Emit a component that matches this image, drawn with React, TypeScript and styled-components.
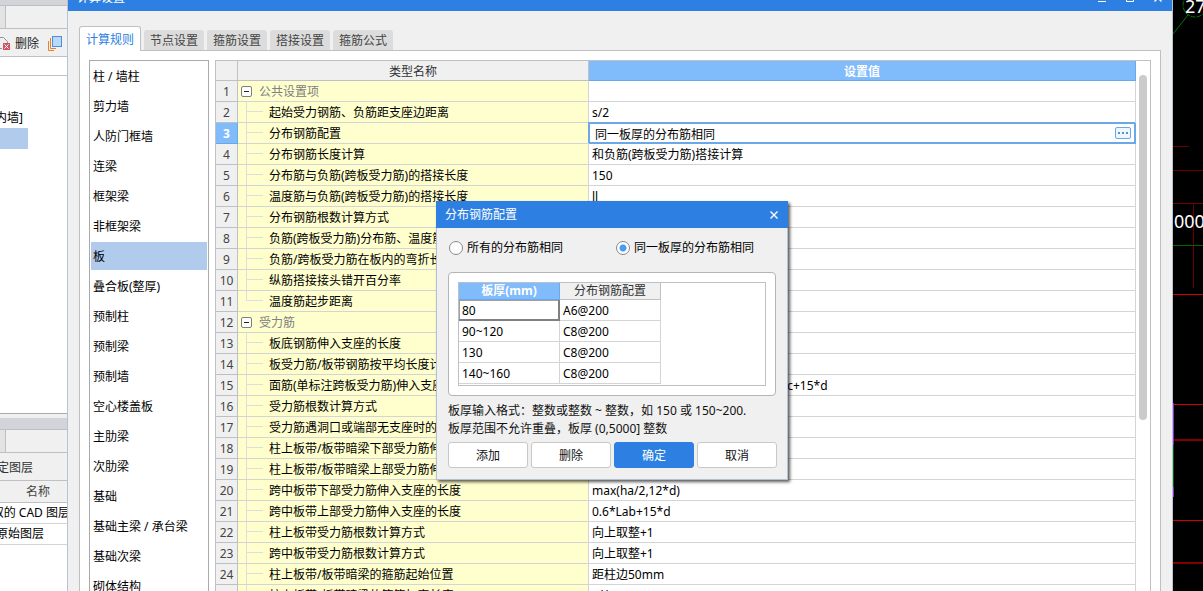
import React, { useState } from "react";
import styled, { createGlobalStyle, css } from "styled-components";

const color = {
  blue: "#2d80e1",
  head: "#80bbfb",
  headLine: "#6aa8e8",
  face: "#f0f0f0",
  line: "#d4d4d4",
  frame: "#bfc0c4",
  yellow: "#ffffce",
  pick: "#b1cbec",
};

const Global = createGlobalStyle`
  *, *::before, *::after { box-sizing: border-box; }
  body {
    margin: 0;
    background: #000;
    overflow: hidden;
  }
  body, button, input {
    font: 12px/16px "Noto Sans", "Noto Sans CJK SC", sans-serif;
    color: #000;
  }
  button { padding: 0; cursor: pointer; }
`;

const Desktop = styled.div`
  position: relative;
  display: flex;
  height: 100vh;
  overflow: hidden;
`;

/* ---------- docked panels on the left ---------- */

const Dock = styled.aside`
  flex: 0 0 67px;
  display: flex;
  flex-direction: column;
  overflow: hidden;
  background: #fff;
  white-space: nowrap;
`;

const DockCaption = styled.div<{ $h: number }>`
  flex: 0 0 ${(p) => p.$h}px;
  background: #d3d4da;
  border-bottom: 1px solid ${color.frame};
`;

const DockTabs = styled.div`
  flex: 0 0 23px;
  background: ${color.face};
  border-bottom: 1px solid ${color.frame};
`;

const DockTab = styled.div`
  width: 6px;
  height: 22px;
  background: #e3e3e3;
  border-right: 1px solid ${color.frame};
`;

const DockBar = styled.div`
  flex: 0 0 28px;
  display: flex;
  align-items: center;
  padding-top: 2px;
  background: ${color.face};
  border-bottom: 1px solid ${color.frame};
  color: #333;
`;

const BarButton = styled.button`
  display: flex;
  align-items: center;
  gap: 4px;
  border: 0;
  background: none;
  color: #222;
`;

const SearchStrip = styled.div`
  flex: 0 0 19px;
  border-bottom: 1px solid ${color.frame};
`;

const DockTree = styled.div`
  flex: 0 0 338px;
  padding-top: 32px;
  border-bottom: 1px solid #aaa;
`;

const TreePick = styled.div`
  width: 28px;
  height: 21px;
  background: ${color.pick};
`;

const DockGap = styled.div`
  flex: 0 0 4px;
  background: ${color.face};
`;

const Scrolled = styled.div<{ $end: number }>`
  display: flex;
  flex: none;
  justify-content: flex-end;
  width: ${(p) => p.$end}px;
  height: 20px;
  align-items: center;
`;

const LayerHead = styled.div`
  flex: 0 0 22px;
  padding: 3px 0 0 26px;
  background: ${color.face};
  border-bottom: 1px solid ${color.frame};
  color: #444;
`;

const LayerRow = styled.div`
  flex: 0 0 21px;
  display: flex;
  align-items: center;
  border-bottom: 1px solid ${color.line};
`;

/* ---------- settings window ---------- */

const SettingsWindow = styled.main`
  flex: 1 1 0;
  min-width: 0;
  display: flex;
  flex-direction: column;
  margin-top: -16px;
  background: ${color.face};
  border: solid #b9c2d2;
  border-width: 0 1px;
`;

const TitleBar = styled.header`
  flex: none;
  height: 27px;
  display: flex;
  align-items: center;
  justify-content: space-between;
  padding: 0 8px 0 9px;
  background: ${color.blue};
  color: #fff;
`;

const TitleTools = styled.div`
  display: flex;
  gap: 16px;
`;

const TitleButton = styled.button`
  display: flex;
  align-items: center;
  justify-content: center;
  width: 12px;
  height: 12px;
  border: 0;
  background: none;
  color: #fff;
`;

const Tabs = styled.nav`
  display: flex;
  align-items: flex-end;
  gap: 3px;
  height: 40px;
  margin: 0 11px -1px;
`;

const Tab = styled.button<{ $on?: boolean }>`
  position: relative;
  height: 20px;
  margin-bottom: 1px;
  padding: 2px 6px 0;
  border: 0;
  border-radius: 3px 3px 0 0;
  background: #dcdcdc;
  color: #444;
  ${(p) =>
    p.$on &&
    css`
      height: 25px;
      margin-bottom: 0;
      border: 1px solid ${color.frame};
      border-bottom: 0;
      background: #fff;
      color: ${color.blue};
    `}
`;

const Page = styled.section`
  flex: 1 1 0;
  min-height: 0;
  display: flex;
  gap: 6px;
  margin: 0 11px;
  padding: 9px 9px 0;
  background: #fff;
  border: 1px solid ${color.frame};
  border-bottom: 0;
  overflow: hidden;
`;

const Kinds = styled.ul`
  flex: 0 0 120px;
  display: flex;
  flex-direction: column;
  gap: 2px;
  margin: 0;
  padding: 1px;
  list-style: none;
  border: 1px solid #aaa;
  border-bottom: 0;
`;

const Kind = styled.button<{ $on: boolean }>`
  width: 100%;
  height: 28px;
  padding: 2px 2px 0;
  display: block;
  border: 0;
  background: ${(p) => (p.$on ? color.pick : "transparent")};
  text-align: left;
`;

const GridFrame = styled.div`
  flex: 1 1 0;
  min-width: 0;
  display: flex;
  border: 1px solid ${color.frame};
  border-bottom: 0;
`;

const Sheet = styled.table`
  flex: 1 1 0;
  align-self: flex-start;
  width: 100%;
  table-layout: fixed;
  border-collapse: separate;
  border-spacing: 0;
  white-space: nowrap;

  td { padding: 0; }
  th { padding: 2px 0 0; }
`;

const ColHead = styled.th<{ $on?: boolean }>`
  height: 20px;
  background: ${(p) => (p.$on ? color.head : color.face)};
  border: solid ${(p) => (p.$on ? color.headLine : color.frame)};
  border-width: 0 1px 1px 0;
  color: ${(p) => (p.$on ? "#fff" : "#333")};
  font-weight: ${(p) => (p.$on ? 700 : 400)};
`;

const RowHead = styled.th<{ $on?: boolean }>`
  height: 21px;
  background: ${(p) => (p.$on ? color.head : color.face)};
  border: solid ${(p) => (p.$on ? color.headLine : color.frame)};
  border-width: 0 1px 1px 0;
  color: ${(p) => (p.$on ? "#fff" : "#444")};
  font-weight: ${(p) => (p.$on ? 700 : 400)};
`;

const NameCell = styled.td`
  background: ${color.yellow};
  border: solid ${color.line};
  border-width: 0 1px 1px 0;
  overflow: hidden;
`;

const NameLine = styled.div<{ $group?: boolean }>`
  display: flex;
  align-items: center;
  height: 20px;
  gap: ${(p) => (p.$group ? 7 : 6)}px;
  padding-left: ${(p) => (p.$group ? 3 : 8)}px;
  color: ${(p) => (p.$group ? "#808080" : "#000")};
`;

const NameText = styled.span`
  padding-top: 2px;
`;

const Guide = styled.span<{ $last?: boolean }>`
  flex: 0 0 17px;
  height: 20px;
  background:
    linear-gradient(#dedede, #dedede) 0 0 / 1px ${(p) => (p.$last ? "50%" : "100%")} no-repeat,
    linear-gradient(#dedede, #dedede) 0 9px / 17px 1px no-repeat;
`;

const Fold = styled.button`
  display: flex;
  align-items: center;
  justify-content: center;
  width: 11px;
  height: 11px;
  border: 1px solid #808080;
  border-radius: 2px;
  background: #fff;

  &::before {
    content: "";
    width: 5px;
    height: 1px;
    background: #222;
  }
`;

const ValueCell = styled.td<{ $on?: boolean }>`
  border: solid ${color.line};
  border-width: 0 1px 1px 0;
  ${(p) =>
    p.$on &&
    css`
      border-color: ${color.headLine};
      box-shadow: inset -1px -1px 0 ${color.headLine}, inset 1px 1px 0 ${color.headLine},
        -1px -1px 0 ${color.headLine};
    `}
`;

const ValueLine = styled.div<{ $edit?: boolean }>`
  display: flex;
  align-items: center;
  height: 20px;
  padding: ${(p) => (p.$edit ? 0 : 2)}px 0 0 3px;
`;

const CellInput = styled.input`
  flex: 1;
  min-width: 0;
  height: 18px;
  padding: 2px 3px 0;
  border: 0;
  outline: 0;
  background: none;
`;

const MoreButton = styled.button`
  display: flex;
  align-items: center;
  justify-content: center;
  gap: 2px;
  width: 16px;
  height: 12px;
  margin-right: 4px;
  border: 1px solid ${color.headLine};
  border-radius: 2px;
  background: #eef6fe;

  i {
    width: 2px;
    height: 2px;
    background: #4a94d8;
  }
`;

const Scroll = styled.div`
  flex: 0 0 14px;
  padding: 14px 3px 0;
`;

const Thumb = styled.div`
  height: 345px;
  border-radius: 4px;
  background: #cbcbcb;
`;

/* ---------- rebar dialog ---------- */

const Dialog = styled.div`
  position: absolute;
  left: 436px;
  top: 201px;
  width: 352px;
  background: ${color.face};
  box-shadow: 2px 2px 3px rgba(0, 0, 0, 0.65);
`;

const DialogBody = styled.form`
  display: flex;
  flex-direction: column;
  padding: 12px 10px 11px 11px;
  border: 1px solid #b4c0d4;
  border-top: 0;
`;

const Choices = styled.div`
  display: grid;
  grid-template-columns: 167px 1fr;
  margin-bottom: 16px;
  padding-left: 1px;
`;

const Choice = styled.label`
  display: flex;
  align-items: center;
  gap: 4px;
`;

const Radio = styled.input`
  appearance: none;
  width: 14px;
  height: 14px;
  margin: 0;
  border: 1px solid #888;
  border-radius: 50%;
  background: #fff;

  &:checked {
    background: radial-gradient(circle, #4a9bf5 0 3px, #fff 4px);
  }
`;

const Group = styled.div`
  width: 328px;
  padding: 9px;
  background: #fff;
  border: 1px solid #b5b5b5;
  border-radius: 4px;
`;

const ThickFrame = styled.div`
  height: 104px;
  border: 1px solid ${color.frame};
`;

const ThickTable = styled.table`
  width: 202px;
  table-layout: fixed;
  border-collapse: separate;
  border-spacing: 0;
`;

const ThickHead = styled.th<{ $on?: boolean }>`
  height: 17px;
  padding: 0;
  background: ${(p) => (p.$on ? color.head : color.face)};
  border: solid ${(p) => (p.$on ? color.headLine : color.frame)};
  border-width: 0 1px 1px 0;
  color: ${(p) => (p.$on ? "#fff" : "#333")};
  font-weight: ${(p) => (p.$on ? 700 : 400)};
`;

const ThickCell = styled.td<{ $on?: boolean }>`
  height: 21px;
  padding: 2px 3px 0;
  border: solid ${color.line};
  border-width: 0 1px 1px 0;
  ${(p) =>
    p.$on &&
    css`
      border-color: #808080;
      box-shadow: inset -1px -1px 0 #808080, inset 1px 1px 0 #a0a0a0;
    `}
`;

const Hint = styled.p`
  margin: 6px 0 4px;
  line-height: 18px;
  color: #111;
  white-space: nowrap;
`;

const Actions = styled.div`
  display: flex;
  justify-content: space-between;
`;

const Action = styled.button<{ $main?: boolean }>`
  width: 80px;
  height: 26px;
  padding-top: 2px;
  border: 1px solid ${(p) => (p.$main ? color.blue : "#c8c8c8")};
  border-radius: 3px;
  background: ${(p) => (p.$main ? color.blue : "#fff")};
  color: ${(p) => (p.$main ? "#fff" : "#111")};
`;

/* ---------- drawing area ---------- */

const Drawing = styled.svg`
  flex: 0 0 30px;
  height: 591px;
  background: #000;
`;

const kinds = [
  "柱 / 墙柱", "剪力墙", "人防门框墙", "连梁", "框架梁", "非框架梁", "板", "叠合板(整厚)", "预制柱",
  "预制梁", "预制墙", "空心楼盖板", "主肋梁", "次肋梁", "基础", "基础主梁 / 承台梁", "基础次梁", "砌体结构",
];

type Row = { name: string; value?: string; group?: boolean; last?: boolean };

const rows: Row[] = [
  { name: "公共设置项", group: true },
  { name: "起始受力钢筋、负筋距支座边距离", value: "s/2" },
  { name: "分布钢筋配置", value: "同一板厚的分布筋相同" },
  { name: "分布钢筋长度计算", value: "和负筋(跨板受力筋)搭接计算" },
  { name: "分布筋与负筋(跨板受力筋)的搭接长度", value: "150" },
  { name: "温度筋与负筋(跨板受力筋)的搭接长度", value: "ll" },
  { name: "分布钢筋根数计算方式", value: "向下取整+1" },
  { name: "负筋(跨板受力筋)分布筋、温度筋是否带弯勾", value: "否" },
  { name: "负筋/跨板受力筋在板内的弯折长度", value: "板厚-2*保护层" },
  { name: "纵筋搭接接头错开百分率", value: "50%" },
  { name: "温度筋起步距离", value: "s", last: true },
  { name: "受力筋", group: true },
  { name: "板底钢筋伸入支座的长度", value: "max(ha/2,5*d)" },
  { name: "板受力筋/板带钢筋按平均长度计算", value: "否" },
  { name: "面筋(单标注跨板受力筋)伸入支座的锚固长度", value: "能直锚就直锚,否则按公式计算:ha-bhc+15*d" },
  { name: "受力筋根数计算方式", value: "向上取整+1" },
  { name: "受力筋遇洞口或端部无支座时的弯折长度", value: "板厚-2*保护层" },
  { name: "柱上板带/板带暗梁下部受力筋伸入支座的长度", value: "ha-bhc+15*d" },
  { name: "柱上板带/板带暗梁上部受力筋伸入支座的长度", value: "0.6*Lab+15*d" },
  { name: "跨中板带下部受力筋伸入支座的长度", value: "max(ha/2,12*d)" },
  { name: "跨中板带上部受力筋伸入支座的长度", value: "0.6*Lab+15*d" },
  { name: "柱上板带受力筋根数计算方式", value: "向上取整+1" },
  { name: "跨中板带受力筋根数计算方式", value: "向上取整+1" },
  { name: "柱上板带/板带暗梁的箍筋起始位置", value: "距柱边50mm" },
  { name: "柱上板带/板带暗梁的箍筋加密长度", value: "3*h" },
];

const thickness = [
  ["80", "A6@200"],
  ["90~120", "C8@200"],
  ["130", "C8@200"],
  ["140~160", "C8@200"],
];

function Cross({ size }: { size: number }) {
  return (
    <svg width={size} height={size} viewBox="0 0 8 8" stroke="currentColor" strokeWidth="1.4" fill="none">
      <path d="M0.5 0.5L7.5 7.5M7.5 0.5L0.5 7.5" />
    </svg>
  );
}

function LeftDock() {
  return (
    <Dock>
      <DockCaption $h={6} />
      <DockTabs>
        <DockTab />
      </DockTabs>
      <DockBar>
        <BarButton type="button">
          <svg width="11" height="16" viewBox="0 0 11 16" fill="none">
            <path d="M0 1.500H3.500L7.500 5.500V7M0 12.500H2" stroke="#8a97a3" />
            <rect x="3" y="7" width="7" height="7" fill="#cf5560" />
            <path d="M4.500 8.500L8.500 12.500M8.500 8.500L4.500 12.500" stroke="#fff" />
          </svg>
          删除
        </BarButton>
        <BarButton type="button" aria-label="复制">
          <svg width="24" height="16" viewBox="0 0 24 16" fill="none">
            <rect x="13.500" y="0.500" width="9" height="10" fill="#b9d8fb" stroke="#4a8fd8" />
            <path d="M11.500 2V12.500H17M9.500 5V14.500H15" stroke="#e8812c" />
          </svg>
        </BarButton>
      </DockBar>
      <SearchStrip />
      <DockTree>
        <Scrolled $end={23}>[内墙]</Scrolled>
        <TreePick />
      </DockTree>
      <DockGap />
      <DockCaption $h={12} />
      <DockTabs>
        <DockTab />
      </DockTabs>
      <DockBar>
        <Scrolled $end={33}>指定图层</Scrolled>
      </DockBar>
      <LayerHead>名称</LayerHead>
      <LayerRow>
        <Scrolled $end={70}>已提取的 CAD 图层</Scrolled>
      </LayerRow>
      <LayerRow>
        <Scrolled $end={44}>原始图层</Scrolled>
      </LayerRow>
    </Dock>
  );
}

function SettingsGrid() {
  return (
    <GridFrame>
      <Sheet>
        <colgroup>
          <col style={{ width: 22 }} />
          <col style={{ width: 351 }} />
          <col />
        </colgroup>
        <thead>
          <tr>
            <ColHead />
            <ColHead>类型名称</ColHead>
            <ColHead $on>设置值</ColHead>
          </tr>
        </thead>
        <tbody>
          {rows.map((row, i) => {
            const on = i === 2;
            return (
              <tr key={i}>
                <RowHead $on={on}>{i + 1}</RowHead>
                <NameCell>
                  <NameLine $group={row.group}>
                    {row.group ? <Fold type="button" aria-label="折叠" /> : <Guide $last={row.last} />}
                    <NameText>{row.name}</NameText>
                  </NameLine>
                </NameCell>
                <ValueCell $on={on}>
                  <ValueLine $edit={on}>
                    {on ? (
                      <>
                        <CellInput aria-label={row.name} defaultValue={row.value} />
                        <MoreButton type="button" aria-label="更多">
                          <i /><i /><i />
                        </MoreButton>
                      </>
                    ) : (
                      row.value
                    )}
                  </ValueLine>
                </ValueCell>
              </tr>
            );
          })}
        </tbody>
      </Sheet>
      <Scroll>
        <Thumb />
      </Scroll>
    </GridFrame>
  );
}

function RebarDialog() {
  const [mode, setMode] = useState("same");
  return (
    <Dialog role="dialog" aria-label="分布钢筋配置">
      <TitleBar>
        分布钢筋配置
        <TitleButton type="button" aria-label="关闭">
          <Cross size={8} />
        </TitleButton>
      </TitleBar>
      <DialogBody onSubmit={(e) => e.preventDefault()}>
        <Choices>
          <Choice>
            <Radio type="radio" name="mode" checked={mode === "all"} onChange={() => setMode("all")} />
            所有的分布筋相同
          </Choice>
          <Choice>
            <Radio type="radio" name="mode" checked={mode === "same"} onChange={() => setMode("same")} />
            同一板厚的分布筋相同
          </Choice>
        </Choices>
        <Group>
          <ThickFrame>
            <ThickTable>
              <thead>
                <tr>
                  <ThickHead $on>板厚(mm)</ThickHead>
                  <ThickHead>分布钢筋配置</ThickHead>
                </tr>
              </thead>
              <tbody>
                {thickness.map(([t, bar], i) => (
                  <tr key={t}>
                    <ThickCell $on={i === 0}>{t}</ThickCell>
                    <ThickCell>{bar}</ThickCell>
                  </tr>
                ))}
              </tbody>
            </ThickTable>
          </ThickFrame>
        </Group>
        <Hint>
          板厚输入格式：整数或整数 ~ 整数，如 150 或 150~200.
          <br />
          板厚范围不允许重叠，板厚 (0,5000] 整数
        </Hint>
        <Actions>
          <Action type="button">添加</Action>
          <Action type="button">删除</Action>
          <Action type="submit" $main>确定</Action>
          <Action type="button">取消</Action>
        </Actions>
      </DialogBody>
    </Dialog>
  );
}

function CadDrawing() {
  return (
    <Drawing viewBox="0 0 30 591" fill="none">
      <path d="M15 15L0 34" stroke="#007800" />
      <circle cx="22" cy="5" r="12" stroke="#007800" strokeDasharray="5 1" />
      <path d="M0 146.500H16M0 170.500H30M0 203.500H30M20.500 203V288" stroke="#6a0000" />
      <path d="M0 245.500H30" stroke="#006400" />
      <path d="M0 294.500H30M0 404.500H30M0 520.500H30" stroke="#d00000" />
      <path d="M0 440H30M0 563H30" stroke="#800000" strokeWidth="2" />
      <path d="M0.500 403V445M0.500 487V497" stroke="#8a2be2" />
      <path d="M0.500 445V487" stroke="#006400" />
      <g fill="#fff" fontSize="18" fontFamily="Noto Sans, sans-serif">
        <text x="12" y="13">27</text>
        <text x="1" y="228">000</text>
      </g>
    </Drawing>
  );
}

export default function App() {
  const [kind, setKind] = useState("板");
  return (
    <>
      <Global />
      <Desktop>
        <LeftDock />
        <SettingsWindow>
          <TitleBar>
            计算设置
            <TitleTools>
              <TitleButton type="button" aria-label="最小化">
                <svg width="8" height="10" viewBox="0 0 8 10"><path d="M0 8.500H8" stroke="#fff" /></svg>
              </TitleButton>
              <TitleButton type="button" aria-label="最大化">
                <svg width="8" height="10" viewBox="0 0 8 10" fill="none"><path d="M0.500 1.500H7.500V8.500H0.500Z" stroke="#fff" /></svg>
              </TitleButton>
              <TitleButton type="button" aria-label="关闭">
                <Cross size={8} />
              </TitleButton>
            </TitleTools>
          </TitleBar>
          <Tabs>
            <Tab type="button" $on>计算规则</Tab>
            <Tab type="button">节点设置</Tab>
            <Tab type="button">箍筋设置</Tab>
            <Tab type="button">搭接设置</Tab>
            <Tab type="button">箍筋公式</Tab>
          </Tabs>
          <Page>
            <Kinds>
              {kinds.map((k) => (
                <li key={k}>
                  <Kind type="button" $on={k === kind} onClick={() => setKind(k)}>
                    {k}
                  </Kind>
                </li>
              ))}
            </Kinds>
            <SettingsGrid />
          </Page>
        </SettingsWindow>
        <CadDrawing />
      </Desktop>
      <RebarDialog />
    </>
  );
}
